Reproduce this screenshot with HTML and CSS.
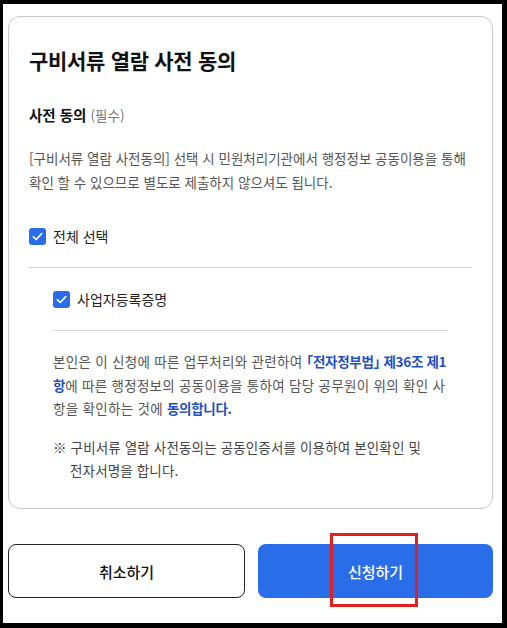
FILE: index.html
```html
<!DOCTYPE html>
<html lang="ko">
<head>
<meta charset="utf-8">
<link rel="stylesheet" href="styles.css">
</head>
<body>
<div class="frame">
  <section class="card">
    <h1 class="title">구비서류 열람 사전 동의</h1>
    <h2 class="label">사전 동의 <span class="req">(필수)</span></h2>
    <p class="desc">[구비서류 열람 사전동의] 선택 시 민원처리기관에서 행정정보 공동이용을 통해 확인 할 수 있으므로 별도로 제출하지 않으셔도 됩니다.</p>
    <label class="check all">
      <svg class="box" width="17" height="17" viewBox="0 0 17 17"><rect width="17" height="17" rx="3" fill="#2a6de9"/><path d="M4.3 8.7 L7.2 11.5 L12.7 5.6" fill="none" stroke="#fff" stroke-width="1.6" stroke-linecap="round" stroke-linejoin="round"/></svg>
      <span>전체 선택</span>
    </label>
    <hr class="divider">
    <div class="sub">
      <label class="check">
        <svg class="box" width="17" height="17" viewBox="0 0 17 17"><rect width="17" height="17" rx="3" fill="#2a6de9"/><path d="M4.3 8.7 L7.2 11.5 L12.7 5.6" fill="none" stroke="#fff" stroke-width="1.6" stroke-linecap="round" stroke-linejoin="round"/></svg>
        <span>사업자등록증명</span>
      </label>
      <hr class="divider">
      <p class="agree">본인은 이 신청에 따른 업무처리와 관련하여 <b class="em">「전자정부법」 제36조 제1<wbr>항</b>에 따른 행정정보의 공동이용을 통하여 담당 공무원이 위의 확인 사항을 확인하는 것에 <b class="em">동의합니다.</b></p>
      <p class="note">※ 구비서류 열람 사전동의는 공동인증서를 이용하여 본인확인 및 전자서명을 합니다.</p>
    </div>
  </section>
  <div class="actions">
    <button class="btn cancel">취소하기</button>
    <button class="btn submit">신청하기</button>
  </div>
  <div class="highlight"></div>
</div>
</body>
</html>
```
FILE: styles.css
```css
html, body {
  margin: 0;
  padding: 0;
  background: #000;
}
body {
  padding: 4px 5px 5px 3px;
  font-family: "Noto Sans CJK KR", "Noto Sans", sans-serif;
  color: #111;
}
.frame {
  position: relative;
  background: #fff;
  height: 619px;
  padding: 12px 9px 0 5px;
  box-sizing: border-box;
}
.card {
  border: 1px solid #c9c9c9;
  border-radius: 12px;
  padding: 28px 20px 25px 20px;
  height: 493px;
  box-sizing: border-box;
}
.title {
  margin: 0;
  font-size: 21px;
  line-height: 30px;
  font-weight: 700;
  color: #111;
  letter-spacing: -0.3px;
}
.label {
  margin: 30px 0 0;
  font-size: 14.5px;
  line-height: 20px;
  font-weight: 700;
  color: #111;
}
.req {
  font-size: 13.5px;
  font-weight: 400;
  color: #777;
}
.desc {
  margin: 21px 0 0;
  font-size: 13.5px;
  line-height: 24px;
  color: #555;
  word-break: keep-all;
}
.check {
  display: flex;
  align-items: center;
  gap: 7px;
  height: 20px;
  font-size: 14px;
  color: #222;
}
.check.all {
  margin-top: 32px;
}
.box {
  flex: none;
}
.divider {
  border: 0;
  border-top: 1px solid #d4d4d4;
  margin: 21px 0 0;
  height: 0;
}
.sub {
  margin: 21px 24px 0;
}
.sub .divider {
  margin-top: 21px;
}
.agree {
  margin: 19px 0 0;
  font-size: 13.5px;
  line-height: 23.5px;
  color: #555;
  letter-spacing: 0.3px;
}
.em {
  color: #1f4fc4;
  font-weight: 700;
  font-feature-settings: "halt";
  letter-spacing: -0.3px;
}
.note {
  margin: 15px 0 0;
  font-size: 13.5px;
  line-height: 23px;
  color: #444;
  padding-left: 17px;
  text-indent: -17px;
  word-break: keep-all;
  letter-spacing: 0.15px;
}
.actions {
  display: flex;
  gap: 13px;
  margin-top: 35px;
}
.btn {
  flex: 1;
  height: 54px;
  border-radius: 8px;
  font-family: inherit;
  font-size: 15px;
  font-weight: 500;
}
.cancel {
  background: #fff;
  border: 1px solid #222;
  color: #111;
}
.submit {
  background: #2a6de9;
  border: 0;
  color: #fff;
}
.highlight {
  position: absolute;
  left: 327px;
  top: 529px;
  width: 88px;
  height: 74px;
  border: 3px solid #e41f1f;
  box-sizing: border-box;
}
```
